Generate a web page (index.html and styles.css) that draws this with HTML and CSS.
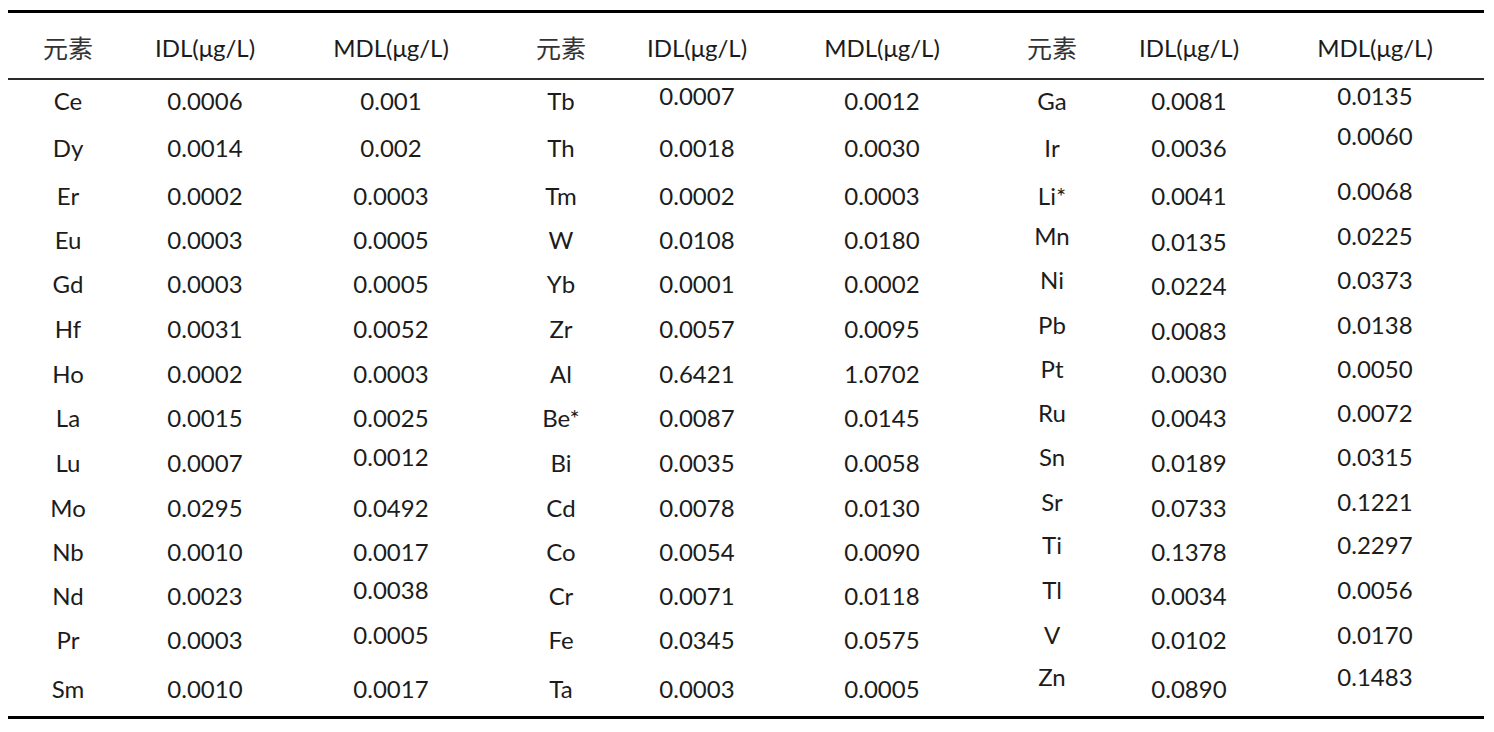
FILE: index.html
```html
<!DOCTYPE html>
<html lang="zh">
<head>
<meta charset="utf-8">
<title>IDL / MDL</title>
<link rel="stylesheet" href="styles.css">
</head>
<body>
<table class="dl">
  <colgroup>
    <col class="c-el"><col class="c-idl"><col class="c-mdl">
    <col class="c-el2"><col class="c-idl2"><col class="c-mdl2">
    <col class="c-el"><col class="c-idl"><col class="c-mdl">
  </colgroup>
  <thead>
    <tr>
      <th><span class="cjk">元素</span></th><th>IDL(μg/L)</th><th>MDL(μg/L)</th>
      <th><span class="cjk">元素</span></th><th>IDL(μg/L)</th><th>MDL(μg/L)</th>
      <th><span class="cjk">元素</span></th><th>IDL(μg/L)</th><th>MDL(μg/L)</th>
    </tr>
  </thead>
  <tbody>
    <tr class="r1"><td>Ce</td><td>0.0006</td><td>0.001</td><td>Tb</td><td class="u5">0.0007</td><td>0.0012</td><td>Ga</td><td>0.0081</td><td class="u5">0.0135</td></tr>
    <tr class="r2"><td>Dy</td><td>0.0014</td><td>0.002</td><td>Th</td><td>0.0018</td><td>0.0030</td><td>Ir</td><td>0.0036</td><td class="u12">0.0060</td></tr>
    <tr class="r3"><td>Er</td><td>0.0002</td><td>0.0003</td><td>Tm</td><td>0.0002</td><td>0.0003</td><td>Li*</td><td>0.0041</td><td class="u5">0.0068</td></tr>
    <tr class="r4"><td>Eu</td><td>0.0003</td><td>0.0005</td><td>W</td><td>0.0108</td><td>0.0180</td><td class="u4">Mn</td><td class="d2">0.0135</td><td class="u4">0.0225</td></tr>
    <tr class="r5"><td>Gd</td><td>0.0003</td><td>0.0005</td><td>Yb</td><td>0.0001</td><td>0.0002</td><td class="u4">Ni</td><td class="d2">0.0224</td><td class="u4">0.0373</td></tr>
    <tr class="r6"><td>Hf</td><td>0.0031</td><td>0.0052</td><td>Zr</td><td>0.0057</td><td>0.0095</td><td class="u4">Pb</td><td class="d2">0.0083</td><td class="u4">0.0138</td></tr>
    <tr class="r7"><td>Ho</td><td>0.0002</td><td>0.0003</td><td>Al</td><td>0.6421</td><td>1.0702</td><td class="u5">Pt</td><td>0.0030</td><td class="u5">0.0050</td></tr>
    <tr class="r8"><td>La</td><td>0.0015</td><td>0.0025</td><td>Be*</td><td>0.0087</td><td>0.0145</td><td class="u5">Ru</td><td>0.0043</td><td class="u5">0.0072</td></tr>
    <tr class="r9"><td>Lu</td><td>0.0007</td><td class="u6">0.0012</td><td>Bi</td><td>0.0035</td><td>0.0058</td><td class="u6">Sn</td><td>0.0189</td><td class="u6">0.0315</td></tr>
    <tr class="r10"><td>Mo</td><td>0.0295</td><td>0.0492</td><td>Cd</td><td>0.0078</td><td>0.0130</td><td class="u6">Sr</td><td>0.0733</td><td class="u6">0.1221</td></tr>
    <tr class="r11"><td>Nb</td><td>0.0010</td><td>0.0017</td><td>Co</td><td>0.0054</td><td>0.0090</td><td class="u7">Ti</td><td>0.1378</td><td class="u7">0.2297</td></tr>
    <tr class="r12"><td>Nd</td><td>0.0023</td><td class="u6">0.0038</td><td>Cr</td><td>0.0071</td><td>0.0118</td><td class="u6">Tl</td><td>0.0034</td><td class="u6">0.0056</td></tr>
    <tr class="r13"><td>Pr</td><td>0.0003</td><td class="u5">0.0005</td><td>Fe</td><td>0.0345</td><td>0.0575</td><td class="u5">V</td><td>0.0102</td><td class="u5">0.0170</td></tr>
    <tr class="r14"><td>Sm</td><td>0.0010</td><td>0.0017</td><td>Ta</td><td>0.0003</td><td>0.0005</td><td class="u12">Zn</td><td>0.0890</td><td class="u12">0.1483</td></tr>
  </tbody>
</table>
</body>
</html>
```
FILE: styles.css
```css
html, body {
  margin: 0;
  padding: 0;
  background: #ffffff;
}

body {
  padding: 10px 0 0 8px;
  font-family: "Lato", "Noto Sans CJK SC", sans-serif;
  color: #1c1c1c;
}

.dl {
  width: 1476px;
  border-collapse: separate;
  border-spacing: 0;
  table-layout: fixed;
  border-top: 3px solid #000;
  border-bottom: 3px solid #000;
  font-size: 24px;
  line-height: 26px;
}

.c-el { width: 120px; }
.c-idl { width: 154px; }
.c-mdl { width: 218px; }
.c-el2 { width: 122px; }
.c-idl2 { width: 150px; }
.c-mdl2 { width: 220px; }

.dl th {
  font-weight: 400;
  text-align: center;
  vertical-align: middle;
  padding: 5px 0 0 0;
  border-bottom: 2px solid #2a2a2a;
  white-space: nowrap;
}

.dl thead tr { height: 67px; }

.cjk {
  font-family: "Noto Sans CJK SC", sans-serif;
  font-size: 25px;
  font-weight: 400;
  color: #333;
}

.dl td {
  text-align: center;
  vertical-align: middle;
  padding: 0;
  white-space: nowrap;
}

.r1 { height: 42px; }
.r2 { height: 52px; }
.r3 { height: 44px; }
.r4 { height: 44px; }
.r5 { height: 44px; }
.r6 { height: 46px; }
.r7 { height: 44px; }
.r8 { height: 44px; }
.r9 { height: 46px; }
.r10 { height: 44px; }
.r11 { height: 44px; }
.r12 { height: 44px; }
.r13 { height: 44px; }
.r14 { height: 54px; }

.dl td.u4 { padding-bottom: 8px; }
.dl td.u5 { padding-bottom: 10px; }
.dl td.u6 { padding-bottom: 12px; }
.dl td.u7 { padding-bottom: 14px; }
.dl td.u12 { padding-bottom: 24px; }
.dl td.d2 { padding-top: 4px; }
```
